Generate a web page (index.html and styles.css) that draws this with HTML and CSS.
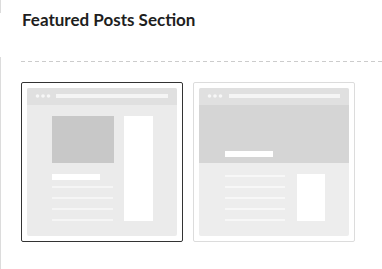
FILE: index.html
```html
<!DOCTYPE html>
<html>
<head>
<meta charset="utf-8">
<link rel="stylesheet" href="styles.css">
</head>
<body>
<div class="panel">
  <div class="head"><h2 class="title">Featured Posts Section</h2></div>
  <div class="divider"></div>
  <div class="cards">
    <div class="card selected">
      <svg width="150" height="148" viewBox="0 0 150 148">
        <rect x="0" y="0" width="150" height="148" rx="2" fill="#ebebeb"/>
        <path d="M2 0H148A2 2 0 0 1 150 2V17H0V2A2 2 0 0 1 2 0Z" fill="#e0e0e0"/>
        <circle cx="10.5" cy="8" r="1.8" fill="#f7f7f7"/>
        <circle cx="16" cy="8" r="1.8" fill="#f7f7f7"/>
        <circle cx="21.5" cy="8" r="1.8" fill="#f7f7f7"/>
        <rect x="29" y="6" width="112" height="4" fill="#f5f5f5"/>
        <rect x="25" y="28" width="62" height="47" fill="#c8c8c8"/>
        <rect x="97" y="28" width="29" height="105" fill="#ffffff"/>
        <rect x="25" y="86" width="48" height="6" fill="#ffffff"/>
        <rect x="25" y="98" width="61" height="2" fill="#f5f5f5"/>
        <rect x="25" y="109" width="61" height="2" fill="#f5f5f5"/>
        <rect x="25" y="120" width="61" height="2" fill="#f5f5f5"/>
        <rect x="25" y="131" width="61" height="2" fill="#f5f5f5"/>
      </svg>
    </div>
    <div class="card">
      <svg width="150" height="148" viewBox="0 0 150 148">
        <rect x="0" y="0" width="150" height="148" rx="2" fill="#ededed"/>
        <path d="M2 0H148A2 2 0 0 1 150 2V17H0V2A2 2 0 0 1 2 0Z" fill="#e0e0e0"/>
        <circle cx="10.5" cy="8" r="1.8" fill="#f7f7f7"/>
        <circle cx="16" cy="8" r="1.8" fill="#f7f7f7"/>
        <circle cx="21.5" cy="8" r="1.8" fill="#f7f7f7"/>
        <rect x="30" y="6" width="111" height="4" fill="#f5f5f5"/>
        <rect x="0" y="17" width="150" height="58" fill="#d5d5d5"/>
        <rect x="26" y="63" width="48" height="6" fill="#ffffff"/>
        <rect x="26" y="87" width="60" height="2" fill="#f7f7f7"/>
        <rect x="26" y="98" width="60" height="2" fill="#f7f7f7"/>
        <rect x="26" y="109" width="60" height="2" fill="#f7f7f7"/>
        <rect x="26" y="120" width="60" height="2" fill="#f7f7f7"/>
        <rect x="26" y="131" width="60" height="2" fill="#f7f7f7"/>
        <rect x="98" y="86" width="28" height="47" fill="#ffffff"/>
      </svg>
    </div>
  </div>
</div>
</body>
</html>
```

FILE: styles.css
```css
html, body {
  margin: 0;
  padding: 0;
  background: #fff;
}
body {
  font-family: Lato, "Open Sans", sans-serif;
}
.panel {
  border-left: 1px solid #dcdcdc;
  min-height: 269px;
  box-sizing: border-box;
  padding-top: 13px;
}
.head {
  margin-left: -1px;
  background: #fff;
  height: 44px;
  padding-left: 22px;
  box-sizing: border-box;
}
.title {
  margin: 0;
  font-size: 17px;
  line-height: 14px;
  font-weight: 700;
  color: #1e1e1e;
}
.divider {
  margin: 4px 0 0 20px;
  height: 1px;
  background: repeating-linear-gradient(to right, #cccccc 0 4px, transparent 4px 7px);
}
.cards {
  display: flex;
  gap: 10px;
  margin: 20px 0 0 20px;
}
.card {
  width: 162px;
  height: 160px;
  box-sizing: border-box;
  border: 1px solid #dcdcdc;
  border-radius: 2px;
  padding: 5px;
  display: flex;
}
.card.selected {
  border-color: #333;
}
.card svg {
  display: block;
}
```
